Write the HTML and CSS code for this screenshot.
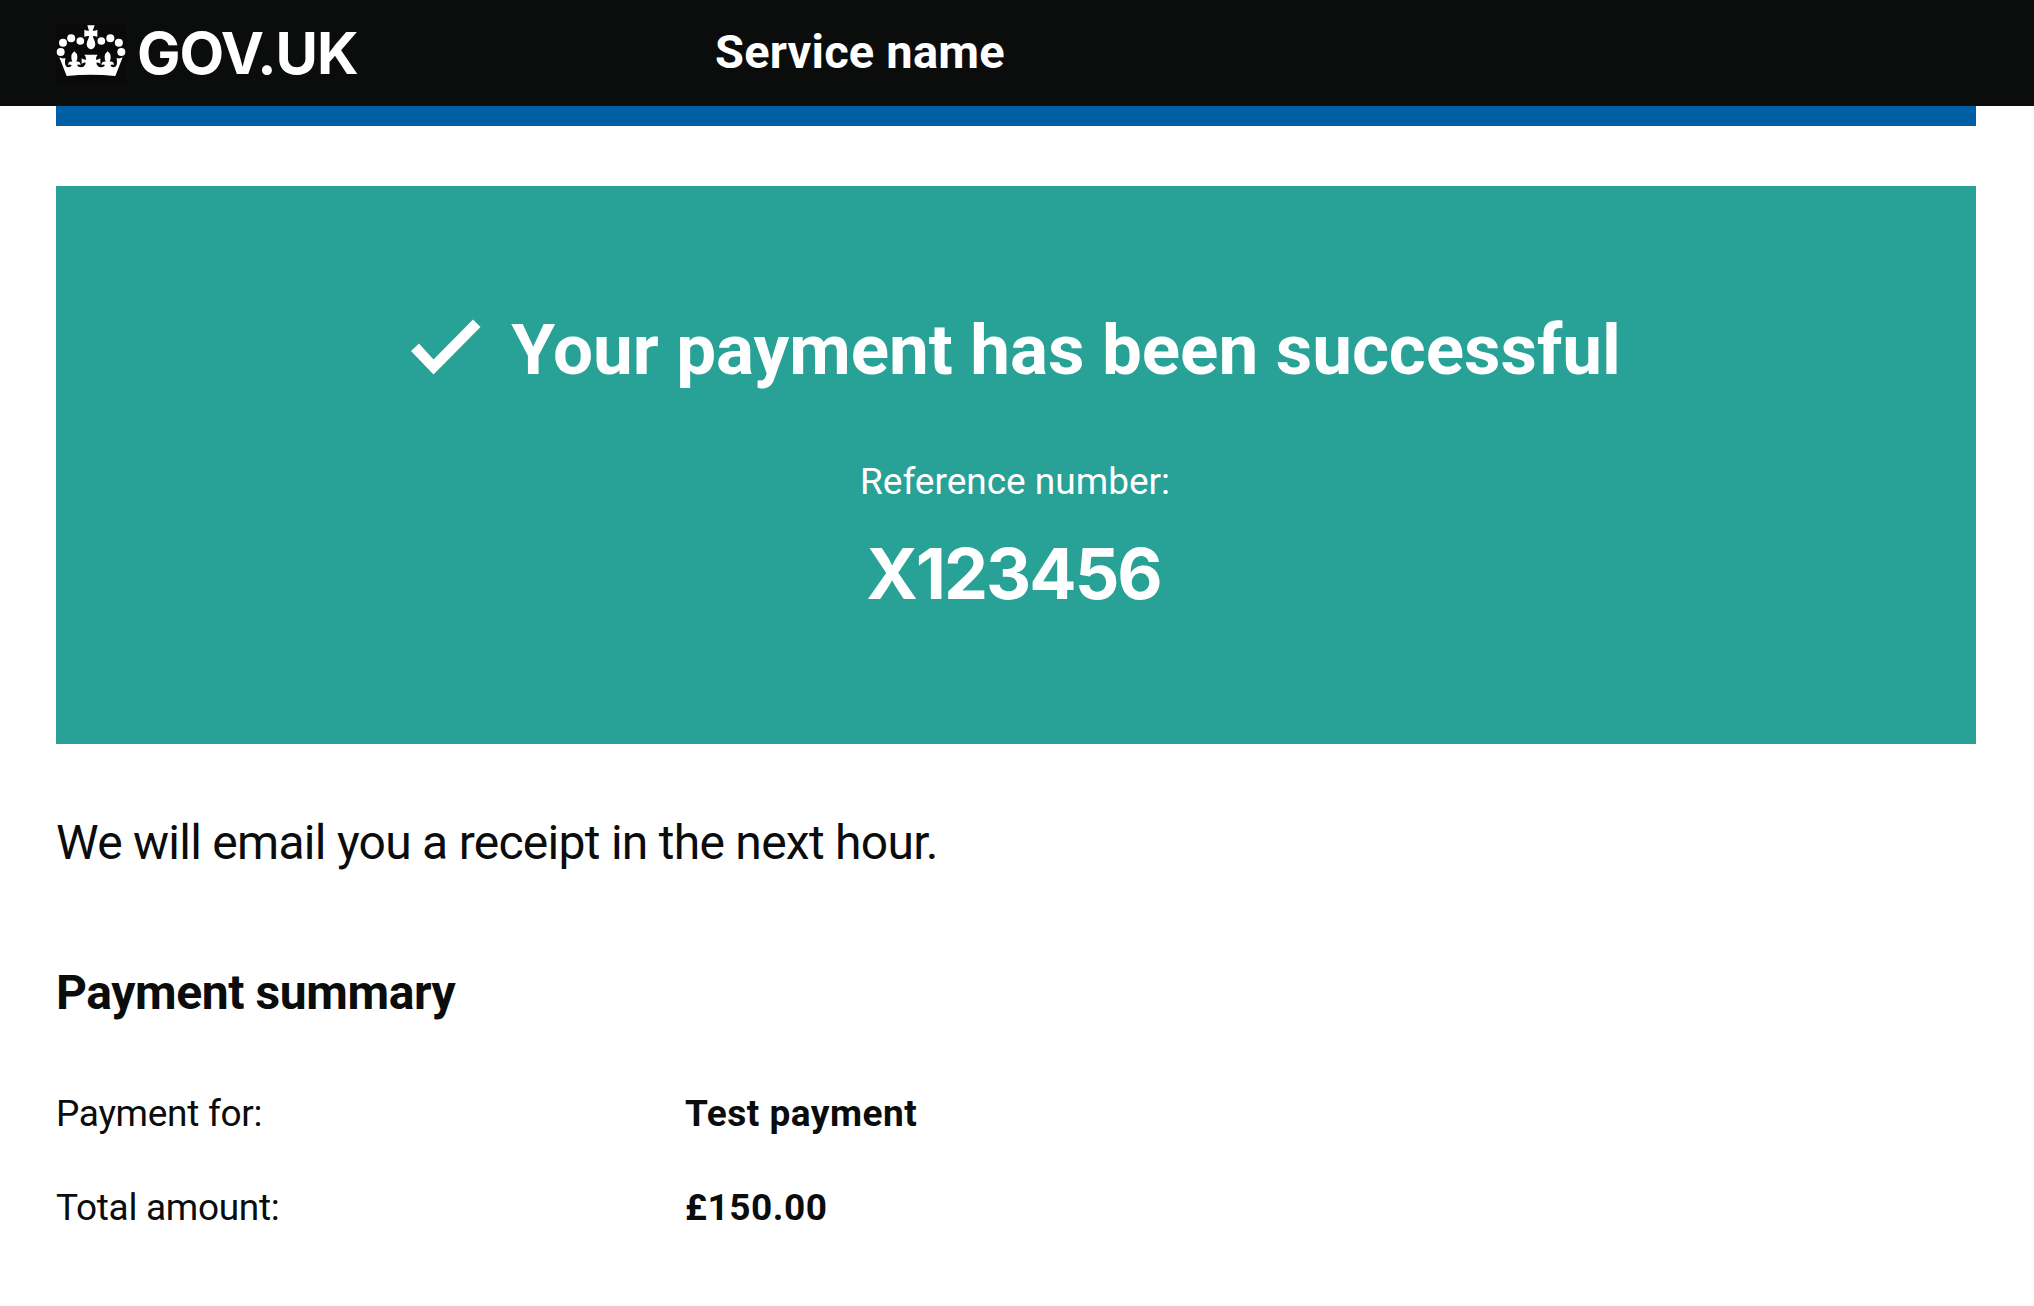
FILE: index.html
```html
<!DOCTYPE html>
<html lang="en">
<head>
<meta charset="utf-8">
<title>Your payment has been successful</title>
<link rel="stylesheet" href="styles.css">
</head>
<body>
<header class="header">
  <a class="logo">
    <svg class="crown" viewBox="48 28 210 183" aria-hidden="true">
      <rect x="48" y="28" width="210" height="183" fill="#0a0a0a"/>
      <g fill="#fff">
        <circle cx="62" cy="112" r="12"/><circle cx="69" cy="84.500" r="12"/><circle cx="93.500" cy="70.500" r="12"/><circle cx="121" cy="79" r="11.5"/>
        <circle cx="244" cy="112" r="12"/><circle cx="236.500" cy="84.500" r="12"/><circle cx="211" cy="70.500" r="12"/><circle cx="184" cy="79" r="11.5"/>
        <path d="M142 32h22l-6 16q8 1 14-3v22q-7-4-13-3 0 7 5 15 5 14-3 21-8 8-16 0-8-7-3-21 5-8 5-15-7-1-14 3V45q7 4 14 3z"/>
        <path d="M58 128q9 5 18 2-1 9-1 15 1 12 10 13 8 0 10-6-5-5-11-1 1-12 13-10-4-8-3-16 1-9 9-15 8 6 9 15 1 8-3 16 12-2 13 10-7-4-11 1 3 6 12 6 12-1 14-14-7-1-12 4v-17q6 5 13 4 2-7-5-15h40q-7 8-5 15 7 1 13-4v17q-5-5-12-4 2 13 14 14 9 0 12-6-4-5-11-1 1-12 13-10-4-8-3-16 1-9 9-15 8 6 9 15 1 8-3 16 12-2 13 10-6-4-11 1 2 6 10 6 9-1 10-13 0-6-1-15 9 3 18-2l-22 56q-73-7-146 0z"/>
      </g>
    </svg>
    <span class="logo-text">GOV.UK</span>
  </a>
  <span class="service">Service name</span>
</header>
<main class="page">
  <div class="phase-bar"></div>
  <section class="panel">
    <h1 class="panel-title">
      <svg class="tick" viewBox="0 0 70 56" aria-hidden="true"><path d="M0 32L8 24.500 22.500 40.500 62 .5 69.500 8 22.500 55.500z" fill="#fff"/></svg>
      <span class="title-text">Your payment has been successful</span>
    </h1>
    <p class="ref-label">Reference number:</p>
    <p class="ref-value">X123456</p>
  </section>
  <p class="lede">We will email you a receipt in the next hour.</p>
  <h2 class="summary-title">Payment summary</h2>
  <dl class="summary">
    <dt class="key">Payment for:</dt><dd class="value">Test payment</dd>
    <dt class="key">Total amount:</dt><dd class="value">£150.00</dd>
  </dl>
</main>
</body>
</html>
```
FILE: styles.css
```css
* { box-sizing: border-box; margin: 0; padding: 0; }
body { background: #fff; color: #0b0c0c; font-family: Roboto, "Liberation Sans", sans-serif; white-space: nowrap; }
.header { display: grid; grid-template-columns: 659px 1fr; height: 106px; padding: 0 56px; background: #0b0d0c; color: #fff; }
.logo { display: flex; align-items: flex-start; gap: 11px; }
.crown { display: block; width: 70px; height: 61px; margin-top: 24px; }
.logo-text { font-family: Inter, "Liberation Sans", sans-serif; font-size: 58px; font-weight: 700; letter-spacing: -1.1px; line-height: 106px; }
.service { font-size: 47px; font-weight: 700; letter-spacing: 0.2px; line-height: 104px; }
.page { padding: 0 58px 0 56px; }
.phase-bar { height: 20px; background: #005ea5; }
.panel { height: 558px; margin-top: 60px; padding-top: 124px; background: #28a197; color: #fff; text-align: center; }
.panel-title { display: flex; justify-content: center; align-items: flex-start; gap: 30px; height: 80px; }
.tick { width: 70px; height: 56px; margin-top: 9px; }
.title-text { font-size: 71px; letter-spacing: -0.05px; line-height: 80px; }
.ref-label { margin-top: 67px; padding-right: 2px; font-size: 37px; line-height: 50px; }
.ref-value { margin-top: 27px; padding-right: 5px; font-family: Inter, "Liberation Sans", sans-serif; font-size: 70px; font-weight: 700; letter-spacing: -2px; line-height: 80px; }
.lede { margin-top: 69px; font-size: 48px; letter-spacing: -0.73px; line-height: 60px; }
.summary-title { margin-top: 90px; font-size: 48px; letter-spacing: -0.4px; line-height: 60px; }
.summary { display: grid; grid-template-columns: 629px 1fr; row-gap: 44px; margin-top: 66px; font-size: 37px; line-height: 50px; }
.key { letter-spacing: -0.3px; }
.value { font-weight: 700; letter-spacing: 0.5px; }
```
